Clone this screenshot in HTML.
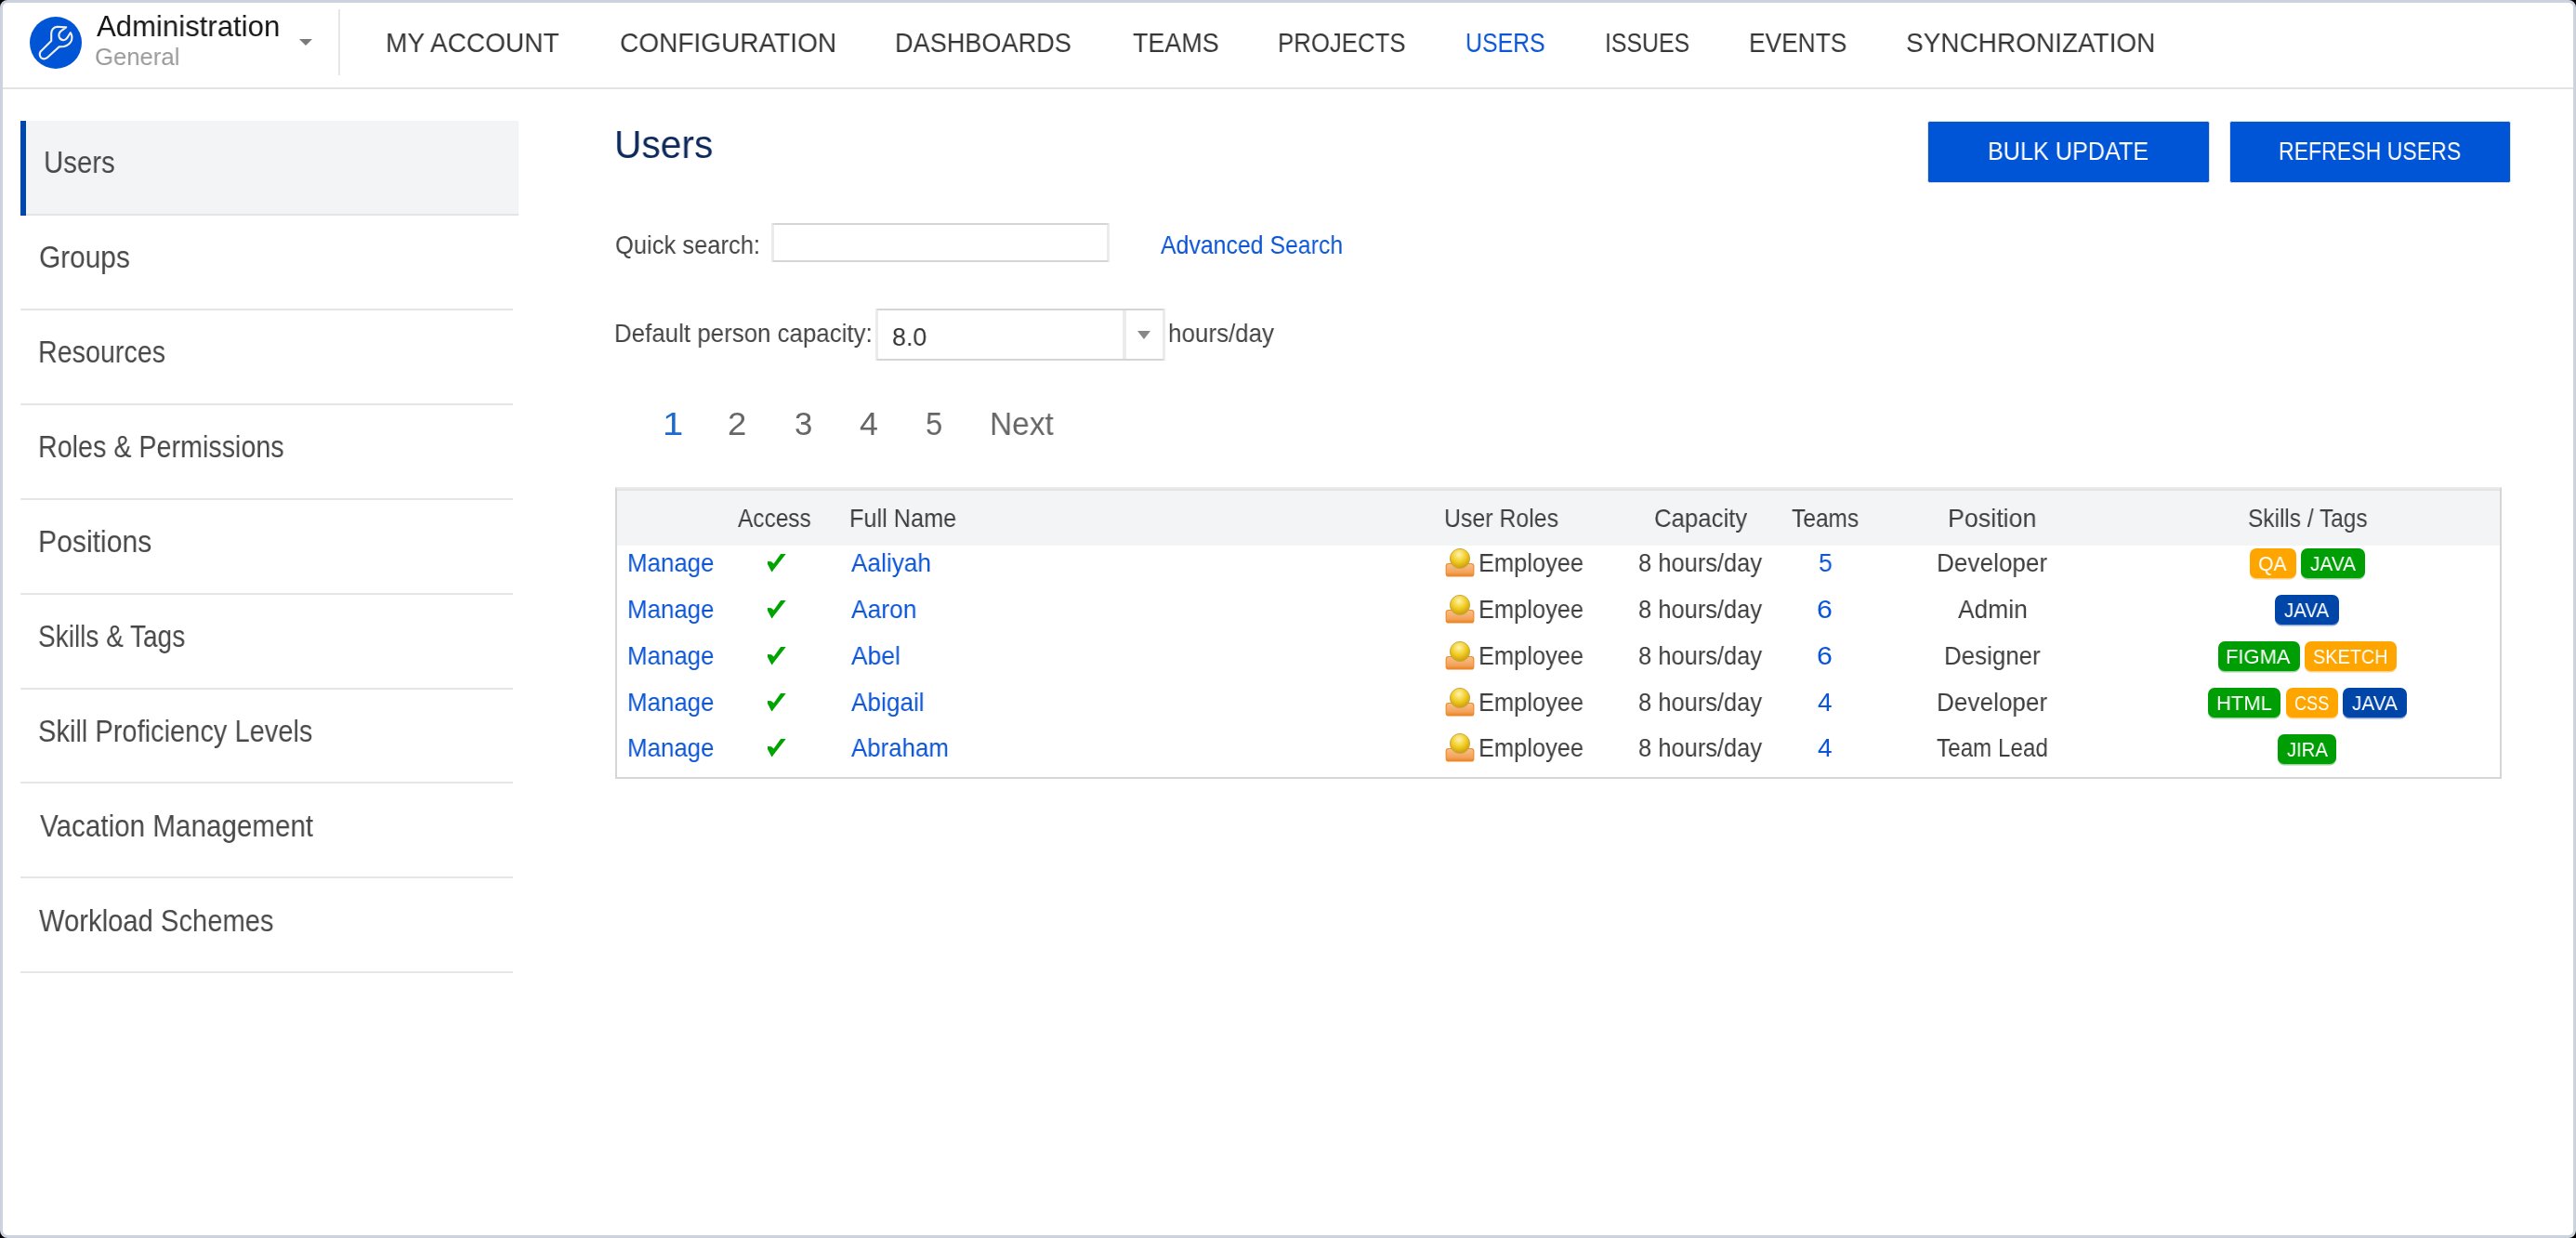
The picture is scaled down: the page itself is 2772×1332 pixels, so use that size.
<!DOCTYPE html>
<html><head><meta charset="utf-8">
<style>
html,body{margin:0;padding:0;background:#000;width:2772px;height:1332px;overflow:hidden}
.frame{position:absolute;left:0;top:0;width:2772px;height:1332px;box-sizing:border-box;border:3px solid #cdd3de;border-radius:8px;background:#fff}
.a{position:absolute}
.t{position:absolute;white-space:nowrap;line-height:1;transform-origin:0 0;font-family:"Liberation Sans",sans-serif;will-change:transform}
.tag{position:absolute;height:32px;border-radius:7px}
.chk{position:absolute;left:820px;width:30px;height:30px}
.ico{position:absolute;left:1550px;width:50px;height:40px}
</style></head><body>
<div class="frame"></div>
<!-- header -->
<div class="a" style="left:3px;top:94px;width:2766px;height:2px;background:#e3e3e3"></div>
<div class="a" style="left:32px;top:18px;width:56px;height:56px;border-radius:50%;background:#0055d6"></div>
<svg class="a" style="left:30px;top:16px" width="60" height="60" viewBox="0 0 60 60">
<path d="M13.4 39.8 L25.2 28 L25.2 20 Q25.6 13.6 31.5 12.8 L41.2 13.4 L36 17.2 Q32.6 19.8 33.6 23.6 Q35 27.4 38.6 27.2 Q41 26.8 42.4 24.6 L45.8 19.2 Q48.2 22.4 47 27.4 Q45 32.6 39 34 L33.6 34.4 L20.6 46.2 Q17 48.6 14 46 Q11.8 43 13.4 39.8 Z" fill="none" stroke="#f1efe8" stroke-width="2.1" stroke-linejoin="round"/>
</svg>
<div class="a" style="left:322px;top:42px;width:0;height:0;border-left:7.2px solid transparent;border-right:7.2px solid transparent;border-top:7.5px solid #7a7a7a"></div>
<div class="a" style="left:364px;top:10px;width:2px;height:71px;background:#e6e6e6"></div>
<!-- sidebar -->
<div class="a" style="left:22px;top:130px;width:536px;height:100px;background:#f3f4f6"></div>
<div class="a" style="left:22px;top:230px;width:536px;height:2px;background:#e4e4e4"></div>
<div class="a" style="left:22px;top:130px;width:6px;height:102px;background:#0047ab"></div>
<div class="a" style="left:22px;top:331.9px;width:530px;height:2px;background:#e6e6e6"></div>
<div class="a" style="left:22px;top:433.8px;width:530px;height:2px;background:#e6e6e6"></div>
<div class="a" style="left:22px;top:535.7px;width:530px;height:2px;background:#e6e6e6"></div>
<div class="a" style="left:22px;top:637.6px;width:530px;height:2px;background:#e6e6e6"></div>
<div class="a" style="left:22px;top:739.5px;width:530px;height:2px;background:#e6e6e6"></div>
<div class="a" style="left:22px;top:841.4px;width:530px;height:2px;background:#e6e6e6"></div>
<div class="a" style="left:22px;top:943.3px;width:530px;height:2px;background:#e6e6e6"></div>
<div class="a" style="left:22px;top:1045.2px;width:530px;height:2px;background:#e6e6e6"></div>
<!-- main controls -->
<div class="a" style="left:2074px;top:130.3px;width:303.5px;height:67.2px;box-sizing:border-box;border:1.5px solid #e2dfda;border-radius:2.5px;background:#0055d6"></div>
<div class="a" style="left:2398.5px;top:130.3px;width:303px;height:67.2px;box-sizing:border-box;border:1.5px solid #e2dfda;border-radius:2.5px;background:#0055d6"></div>
<div class="a" style="left:830.2px;top:240px;width:363.7px;height:42px;box-sizing:border-box;border-top:2px solid #d5d5d5;border-bottom:2px solid #d5d5d5;border-left:3.6px solid #ebebeb;border-right:3.6px solid #ebebeb;border-radius:2px"></div>
<div class="a" style="left:942.2px;top:332px;width:311.6px;height:55.8px;box-sizing:border-box;border-top:2px solid #d5d5d5;border-bottom:2px solid #d5d5d5;border-left:3.6px solid #ebebeb;border-right:3.6px solid #ebebeb;border-radius:2px"></div>
<div class="a" style="left:1208.3px;top:334px;width:3.4px;height:51.8px;background:#ebebeb"></div>
<div class="a" style="left:1223.8px;top:356.1px;width:0;height:0;border-left:7.1px solid transparent;border-right:7.1px solid transparent;border-top:9.6px solid #888"></div>
<!-- table -->
<div class="a" style="left:662px;top:524px;width:2030px;height:314px;box-sizing:border-box;border:2px solid #d6d6d6;border-top:2px solid #ebebeb"></div>
<div class="a" style="left:664px;top:526px;width:2026px;height:2px;background:#e4e4e4"></div>
<div class="a" style="left:664px;top:528px;width:2026px;height:58.5px;background:#f3f4f6"></div>
<svg class="chk" style="top:590.00px" viewBox="0 0 30 30"><path d="M6 14 L10 14.2 L12.6 16.4 L20.1 6 L25.7 6 L12 23.6 L11 25.3 L10.2 25.1 L6 17 Z" fill="#00a400"/></svg>
<svg class="ico" style="top:585.00px" viewBox="0 0 50 40"><defs><radialGradient id="hg0" cx="0.45" cy="0.3" r="0.7"><stop offset="0" stop-color="#fff3b0"/><stop offset="0.55" stop-color="#f0cc20"/><stop offset="1" stop-color="#c89a10"/></radialGradient><linearGradient id="bg0" x1="0" y1="0" x2="0" y2="1"><stop offset="0" stop-color="#f9c08a"/><stop offset="0.7" stop-color="#f2a35a"/><stop offset="1" stop-color="#ea8020"/></linearGradient></defs><rect x="6.2" y="21.5" width="29.6" height="13.5" rx="2.5" fill="url(#bg0)" stroke="#ef8a2a" stroke-width="1.2"/><circle cx="21" cy="16" r="10.6" fill="url(#hg0)" stroke="#cfa640" stroke-width="1"/></svg>
<svg class="chk" style="top:639.85px" viewBox="0 0 30 30"><path d="M6 14 L10 14.2 L12.6 16.4 L20.1 6 L25.7 6 L12 23.6 L11 25.3 L10.2 25.1 L6 17 Z" fill="#00a400"/></svg>
<svg class="ico" style="top:634.85px" viewBox="0 0 50 40"><defs><radialGradient id="hg1" cx="0.45" cy="0.3" r="0.7"><stop offset="0" stop-color="#fff3b0"/><stop offset="0.55" stop-color="#f0cc20"/><stop offset="1" stop-color="#c89a10"/></radialGradient><linearGradient id="bg1" x1="0" y1="0" x2="0" y2="1"><stop offset="0" stop-color="#f9c08a"/><stop offset="0.7" stop-color="#f2a35a"/><stop offset="1" stop-color="#ea8020"/></linearGradient></defs><rect x="6.2" y="21.5" width="29.6" height="13.5" rx="2.5" fill="url(#bg1)" stroke="#ef8a2a" stroke-width="1.2"/><circle cx="21" cy="16" r="10.6" fill="url(#hg1)" stroke="#cfa640" stroke-width="1"/></svg>
<svg class="chk" style="top:689.70px" viewBox="0 0 30 30"><path d="M6 14 L10 14.2 L12.6 16.4 L20.1 6 L25.7 6 L12 23.6 L11 25.3 L10.2 25.1 L6 17 Z" fill="#00a400"/></svg>
<svg class="ico" style="top:684.70px" viewBox="0 0 50 40"><defs><radialGradient id="hg2" cx="0.45" cy="0.3" r="0.7"><stop offset="0" stop-color="#fff3b0"/><stop offset="0.55" stop-color="#f0cc20"/><stop offset="1" stop-color="#c89a10"/></radialGradient><linearGradient id="bg2" x1="0" y1="0" x2="0" y2="1"><stop offset="0" stop-color="#f9c08a"/><stop offset="0.7" stop-color="#f2a35a"/><stop offset="1" stop-color="#ea8020"/></linearGradient></defs><rect x="6.2" y="21.5" width="29.6" height="13.5" rx="2.5" fill="url(#bg2)" stroke="#ef8a2a" stroke-width="1.2"/><circle cx="21" cy="16" r="10.6" fill="url(#hg2)" stroke="#cfa640" stroke-width="1"/></svg>
<svg class="chk" style="top:739.55px" viewBox="0 0 30 30"><path d="M6 14 L10 14.2 L12.6 16.4 L20.1 6 L25.7 6 L12 23.6 L11 25.3 L10.2 25.1 L6 17 Z" fill="#00a400"/></svg>
<svg class="ico" style="top:734.55px" viewBox="0 0 50 40"><defs><radialGradient id="hg3" cx="0.45" cy="0.3" r="0.7"><stop offset="0" stop-color="#fff3b0"/><stop offset="0.55" stop-color="#f0cc20"/><stop offset="1" stop-color="#c89a10"/></radialGradient><linearGradient id="bg3" x1="0" y1="0" x2="0" y2="1"><stop offset="0" stop-color="#f9c08a"/><stop offset="0.7" stop-color="#f2a35a"/><stop offset="1" stop-color="#ea8020"/></linearGradient></defs><rect x="6.2" y="21.5" width="29.6" height="13.5" rx="2.5" fill="url(#bg3)" stroke="#ef8a2a" stroke-width="1.2"/><circle cx="21" cy="16" r="10.6" fill="url(#hg3)" stroke="#cfa640" stroke-width="1"/></svg>
<svg class="chk" style="top:789.40px" viewBox="0 0 30 30"><path d="M6 14 L10 14.2 L12.6 16.4 L20.1 6 L25.7 6 L12 23.6 L11 25.3 L10.2 25.1 L6 17 Z" fill="#00a400"/></svg>
<svg class="ico" style="top:784.40px" viewBox="0 0 50 40"><defs><radialGradient id="hg4" cx="0.45" cy="0.3" r="0.7"><stop offset="0" stop-color="#fff3b0"/><stop offset="0.55" stop-color="#f0cc20"/><stop offset="1" stop-color="#c89a10"/></radialGradient><linearGradient id="bg4" x1="0" y1="0" x2="0" y2="1"><stop offset="0" stop-color="#f9c08a"/><stop offset="0.7" stop-color="#f2a35a"/><stop offset="1" stop-color="#ea8020"/></linearGradient></defs><rect x="6.2" y="21.5" width="29.6" height="13.5" rx="2.5" fill="url(#bg4)" stroke="#ef8a2a" stroke-width="1.2"/><circle cx="21" cy="16" r="10.6" fill="url(#hg4)" stroke="#cfa640" stroke-width="1"/></svg>
<div class="t" style="left:103.50px;top:13.46px;font-size:31.30px;color:#161616;transform:scaleX(0.9945);">Administration</div>
<div class="t" style="left:102.22px;top:47.88px;font-size:26.38px;color:#9a9a9a;transform:scaleX(0.9738);">General</div>
<div class="t" style="left:414.75px;top:30.95px;font-size:30.00px;color:#363636;transform:scaleX(0.9355);">MY ACCOUNT</div>
<div class="t" style="left:666.60px;top:30.95px;font-size:30.00px;color:#363636;transform:scaleX(0.9346);">CONFIGURATION</div>
<div class="t" style="left:963.09px;top:30.95px;font-size:30.00px;color:#363636;transform:scaleX(0.9041);">DASHBOARDS</div>
<div class="t" style="left:1218.50px;top:30.95px;font-size:30.00px;color:#363636;transform:scaleX(0.8973);">TEAMS</div>
<div class="t" style="left:1375.18px;top:30.95px;font-size:30.00px;color:#363636;transform:scaleX(0.8594);">PROJECTS</div>
<div class="t" style="left:1576.74px;top:30.95px;font-size:30.00px;color:#0b55d6;transform:scaleX(0.8288);">USERS</div>
<div class="t" style="left:1726.76px;top:30.95px;font-size:30.00px;color:#363636;transform:scaleX(0.8282);">ISSUES</div>
<div class="t" style="left:1881.91px;top:30.95px;font-size:30.00px;color:#363636;transform:scaleX(0.8773);">EVENTS</div>
<div class="t" style="left:2051.36px;top:30.95px;font-size:30.00px;color:#363636;transform:scaleX(0.9326);">SYNCHRONIZATION</div>
<div class="t" style="left:47.18px;top:159.43px;font-size:32.90px;color:#484848;transform:scaleX(0.8928);">Users</div>
<div class="t" style="left:41.55px;top:261.33px;font-size:32.90px;color:#484848;transform:scaleX(0.9070);">Groups</div>
<div class="t" style="left:40.71px;top:363.23px;font-size:32.90px;color:#484848;transform:scaleX(0.8720);">Resources</div>
<div class="t" style="left:40.71px;top:465.13px;font-size:32.90px;color:#484848;transform:scaleX(0.8720);">Roles &amp; Permissions</div>
<div class="t" style="left:40.59px;top:567.03px;font-size:32.90px;color:#484848;transform:scaleX(0.9161);">Positions</div>
<div class="t" style="left:41.38px;top:668.93px;font-size:32.90px;color:#484848;transform:scaleX(0.8512);">Skills &amp; Tags</div>
<div class="t" style="left:41.34px;top:770.83px;font-size:32.90px;color:#484848;transform:scaleX(0.8832);">Skill Proficiency Levels</div>
<div class="t" style="left:42.50px;top:872.73px;font-size:32.90px;color:#484848;transform:scaleX(0.9004);">Vacation Management</div>
<div class="t" style="left:42.00px;top:974.63px;font-size:32.90px;color:#484848;transform:scaleX(0.8876);">Workload Schemes</div>
<div class="t" style="left:661.39px;top:134.12px;font-size:42.61px;color:#0e2a5c;transform:scaleX(0.9557);">Users</div>
<div class="t" style="left:2138.98px;top:148.71px;font-size:27.54px;color:#ffffff;transform:scaleX(0.9152);">BULK UPDATE</div>
<div class="t" style="left:2451.65px;top:148.71px;font-size:27.54px;color:#ffffff;transform:scaleX(0.8382);">REFRESH USERS</div>
<div class="t" style="left:662.00px;top:248.76px;font-size:28.55px;color:#444;transform:scaleX(0.8939);">Quick search:</div>
<div class="t" style="left:1249.24px;top:248.76px;font-size:28.55px;color:#0b55d6;transform:scaleX(0.8703);">Advanced Search</div>
<div class="t" style="left:660.95px;top:344.26px;font-size:28.55px;color:#444;transform:scaleX(0.9071);">Default person capacity:</div>
<div class="t" style="left:960.45px;top:348.16px;font-size:28.55px;color:#333;transform:scaleX(0.9394);">8.0</div>
<div class="t" style="left:1256.66px;top:344.26px;font-size:28.55px;color:#444;transform:scaleX(0.9097);">hours/day</div>
<div class="t" style="left:713.19px;top:439.26px;font-size:34.78px;color:#1a6ad0;transform:scaleX(1.1523);font-family:"Liberation Mono",monospace;">1</div>
<div class="t" style="left:783.40px;top:439.26px;font-size:34.78px;color:#666;transform:scaleX(1.0487);">2</div>
<div class="t" style="left:854.94px;top:439.26px;font-size:34.78px;color:#666;transform:scaleX(0.9986);">3</div>
<div class="t" style="left:925.02px;top:439.26px;font-size:34.78px;color:#666;transform:scaleX(1.0294);">4</div>
<div class="t" style="left:996.45px;top:439.26px;font-size:34.78px;color:#666;transform:scaleX(0.9428);">5</div>
<div class="t" style="left:1064.80px;top:439.26px;font-size:34.78px;color:#666;transform:scaleX(0.9629);">Next</div>
<div class="t" style="left:793.98px;top:544.27px;font-size:27.83px;color:#3e3e3e;transform:scaleX(0.8781);">Access</div>
<div class="t" style="left:913.98px;top:544.27px;font-size:27.83px;color:#3e3e3e;transform:scaleX(0.9084);">Full Name</div>
<div class="t" style="left:1554.26px;top:544.27px;font-size:27.83px;color:#3e3e3e;transform:scaleX(0.8938);">User Roles</div>
<div class="t" style="left:1779.71px;top:544.27px;font-size:27.83px;color:#3e3e3e;transform:scaleX(0.9262);">Capacity</div>
<div class="t" style="left:1928.27px;top:544.27px;font-size:27.83px;color:#3e3e3e;transform:scaleX(0.8810);">Teams</div>
<div class="t" style="left:2096.09px;top:544.27px;font-size:27.83px;color:#3e3e3e;transform:scaleX(0.9638);">Position</div>
<div class="t" style="left:2419.02px;top:544.27px;font-size:27.83px;color:#3e3e3e;transform:scaleX(0.8782);">Skills / Tags</div>
<div class="t" style="left:675.41px;top:591.97px;font-size:27.83px;color:#0b55d6;transform:scaleX(0.9301);">Manage</div>
<div class="t" style="left:915.76px;top:591.97px;font-size:27.83px;color:#0b55d6;transform:scaleX(0.9422);">Aaliyah</div>
<div class="t" style="left:1591.45px;top:591.97px;font-size:27.83px;color:#3e3e3e;transform:scaleX(0.9130);">Employee</div>
<div class="t" style="left:1762.96px;top:591.97px;font-size:27.83px;color:#3e3e3e;transform:scaleX(0.9148);">8 hours/day</div>
<div class="t" style="left:1956.94px;top:591.97px;font-size:27.83px;color:#0b55d6;transform:scaleX(0.9553);">5</div>
<div class="t" style="left:2083.93px;top:591.97px;font-size:27.83px;color:#3e3e3e;transform:scaleX(0.9396);">Developer</div>
<div class="t" style="left:675.41px;top:641.82px;font-size:27.83px;color:#0b55d6;transform:scaleX(0.9301);">Manage</div>
<div class="t" style="left:915.76px;top:641.82px;font-size:27.83px;color:#0b55d6;transform:scaleX(0.9492);">Aaron</div>
<div class="t" style="left:1591.45px;top:641.82px;font-size:27.83px;color:#3e3e3e;transform:scaleX(0.9130);">Employee</div>
<div class="t" style="left:1762.96px;top:641.82px;font-size:27.83px;color:#3e3e3e;transform:scaleX(0.9148);">8 hours/day</div>
<div class="t" style="left:1955.18px;top:641.82px;font-size:27.83px;color:#0b55d6;transform:scaleX(1.0904);">6</div>
<div class="t" style="left:2107.24px;top:641.82px;font-size:27.83px;color:#3e3e3e;transform:scaleX(0.9474);">Admin</div>
<div class="t" style="left:675.41px;top:691.67px;font-size:27.83px;color:#0b55d6;transform:scaleX(0.9301);">Manage</div>
<div class="t" style="left:915.76px;top:691.67px;font-size:27.83px;color:#0b55d6;transform:scaleX(0.9499);">Abel</div>
<div class="t" style="left:1591.45px;top:691.67px;font-size:27.83px;color:#3e3e3e;transform:scaleX(0.9130);">Employee</div>
<div class="t" style="left:1762.96px;top:691.67px;font-size:27.83px;color:#3e3e3e;transform:scaleX(0.9148);">8 hours/day</div>
<div class="t" style="left:1955.18px;top:691.67px;font-size:27.83px;color:#0b55d6;transform:scaleX(1.0904);">6</div>
<div class="t" style="left:2091.67px;top:691.67px;font-size:27.83px;color:#3e3e3e;transform:scaleX(0.9309);">Designer</div>
<div class="t" style="left:675.41px;top:741.52px;font-size:27.83px;color:#0b55d6;transform:scaleX(0.9301);">Manage</div>
<div class="t" style="left:915.76px;top:741.52px;font-size:27.83px;color:#0b55d6;transform:scaleX(0.9413);">Abigail</div>
<div class="t" style="left:1591.45px;top:741.52px;font-size:27.83px;color:#3e3e3e;transform:scaleX(0.9130);">Employee</div>
<div class="t" style="left:1762.96px;top:741.52px;font-size:27.83px;color:#3e3e3e;transform:scaleX(0.9148);">8 hours/day</div>
<div class="t" style="left:1956.14px;top:741.52px;font-size:27.83px;color:#0b55d6;transform:scaleX(1.0048);">4</div>
<div class="t" style="left:2083.93px;top:741.52px;font-size:27.83px;color:#3e3e3e;transform:scaleX(0.9396);">Developer</div>
<div class="t" style="left:675.41px;top:791.37px;font-size:27.83px;color:#0b55d6;transform:scaleX(0.9301);">Manage</div>
<div class="t" style="left:915.76px;top:791.37px;font-size:27.83px;color:#0b55d6;transform:scaleX(0.9290);">Abraham</div>
<div class="t" style="left:1591.45px;top:791.37px;font-size:27.83px;color:#3e3e3e;transform:scaleX(0.9130);">Employee</div>
<div class="t" style="left:1762.96px;top:791.37px;font-size:27.83px;color:#3e3e3e;transform:scaleX(0.9148);">8 hours/day</div>
<div class="t" style="left:1956.14px;top:791.37px;font-size:27.83px;color:#0b55d6;transform:scaleX(1.0048);">4</div>
<div class="t" style="left:2084.30px;top:791.37px;font-size:27.83px;color:#3e3e3e;transform:scaleX(0.8703);">Team Lead</div>
<div class="tag" style="left:2420.50px;top:590.00px;width:50.10px;background:#ffa500;box-shadow:0 1.6px 0 #ffd08a"></div>
<div class="t" style="left:2429.75px;top:596.12px;font-size:22.61px;color:#fff;transform:scaleX(0.9394)">QA</div>
<div class="tag" style="left:2476.00px;top:590.00px;width:69.20px;background:#009e05;box-shadow:0 1.6px 0 #9ad39c"></div>
<div class="t" style="left:2485.89px;top:596.12px;font-size:22.61px;color:#fff;transform:scaleX(0.9240)">JAVA</div>
<div class="tag" style="left:2448.40px;top:639.90px;width:68.30px;background:#0045a8;box-shadow:0 1.6px 0 #8aa6d6"></div>
<div class="t" style="left:2458.29px;top:646.02px;font-size:22.61px;color:#fff;transform:scaleX(0.9070)">JAVA</div>
<div class="tag" style="left:2386.60px;top:689.80px;width:88.00px;background:#009e05;box-shadow:0 1.6px 0 #9ad39c"></div>
<div class="t" style="left:2394.94px;top:695.92px;font-size:22.61px;color:#fff;transform:scaleX(0.9707)">FIGMA</div>
<div class="tag" style="left:2480.00px;top:689.80px;width:98.50px;background:#ffa500;box-shadow:0 1.6px 0 #ffd08a"></div>
<div class="t" style="left:2489.31px;top:695.92px;font-size:22.61px;color:#fff;transform:scaleX(0.8781)">SKETCH</div>
<div class="tag" style="left:2376.25px;top:739.70px;width:77.65px;background:#009e05;box-shadow:0 1.6px 0 #9ad39c"></div>
<div class="t" style="left:2384.59px;top:745.82px;font-size:22.61px;color:#fff;transform:scaleX(0.9713)">HTML</div>
<div class="tag" style="left:2460.00px;top:739.70px;width:55.90px;background:#ffa500;box-shadow:0 1.6px 0 #ffd08a"></div>
<div class="t" style="left:2469.19px;top:745.82px;font-size:22.61px;color:#fff;transform:scaleX(0.8019)">CSS</div>
<div class="tag" style="left:2520.70px;top:739.70px;width:69.00px;background:#0045a8;box-shadow:0 1.6px 0 #8aa6d6"></div>
<div class="t" style="left:2530.59px;top:745.82px;font-size:22.61px;color:#fff;transform:scaleX(0.9202)">JAVA</div>
<div class="tag" style="left:2450.60px;top:789.60px;width:63.90px;background:#009e05;box-shadow:0 1.6px 0 #9ad39c"></div>
<div class="t" style="left:2460.50px;top:795.72px;font-size:22.61px;color:#fff;transform:scaleX(0.8949)">JIRA</div>
</body></html>
